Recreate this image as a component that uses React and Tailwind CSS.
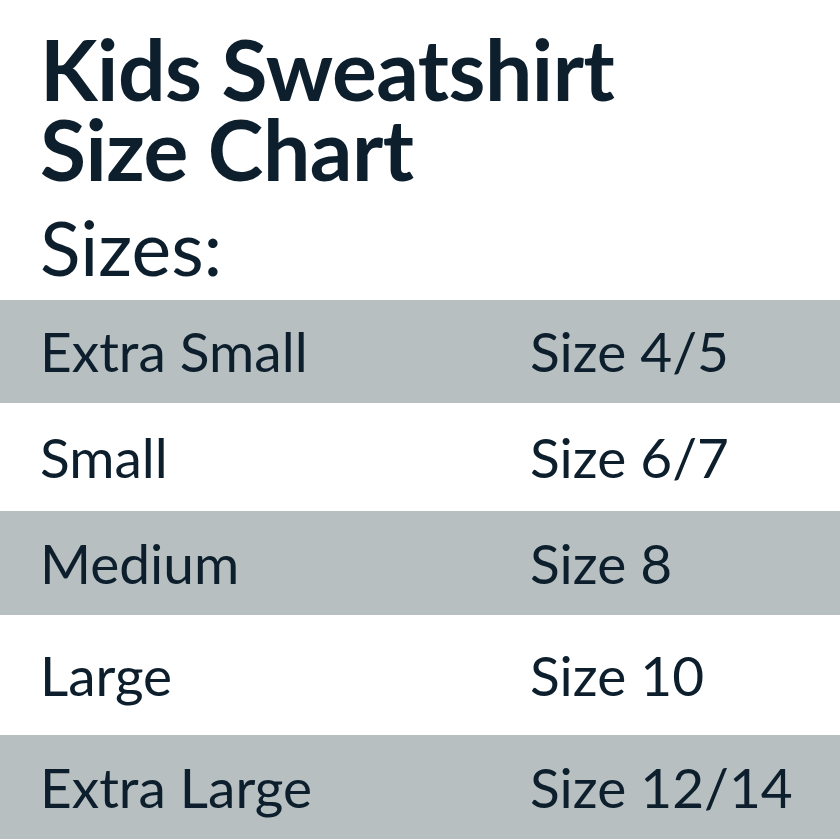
const rows = [
  { name: "Extra Small", size: "Size 4/5", bg: "bg-[#b7bfc1]", h: "h-[103px]" },
  { name: "Small", size: "Size 6/7", bg: "bg-white", h: "h-[108px]" },
  { name: "Medium", size: "Size 8", bg: "bg-[#b7bfc1]", h: "h-[104px]" },
  { name: "Large", size: "Size 10", bg: "bg-white", h: "h-[120px]" },
  { name: "Extra Large", size: "Size 12/14", bg: "bg-[#b7bfc1]", h: "h-[104px]" },
];

const App = () => {
  return (
    <section className="w-[840px] h-[840px] bg-white text-[#0d1f2d] font-['Lato',sans-serif] overflow-hidden">
      <div className="pl-[40px] pt-[29px]">
        <h1 className="font-bold text-[84px] tracking-[-0.5px]">
          <div className="leading-[80px]">Kids Sweatshirt</div>
          <div className="leading-[80px]">Size Chart</div>
        </h1>
        <p className="text-[75px] leading-[90px] mt-[13px]">Sizes:</p>
      </div>
      <div className="mt-[8px]">
        {rows.map((r) => (
          <div key={r.name} className={`${r.bg} ${r.h} flex items-center text-[55px] leading-none`}>
            <span className="w-[530px] pl-[40px]">{r.name}</span>
            <span>{r.size}</span>
          </div>
        ))}
      </div>
    </section>
  );
};

export default App;
